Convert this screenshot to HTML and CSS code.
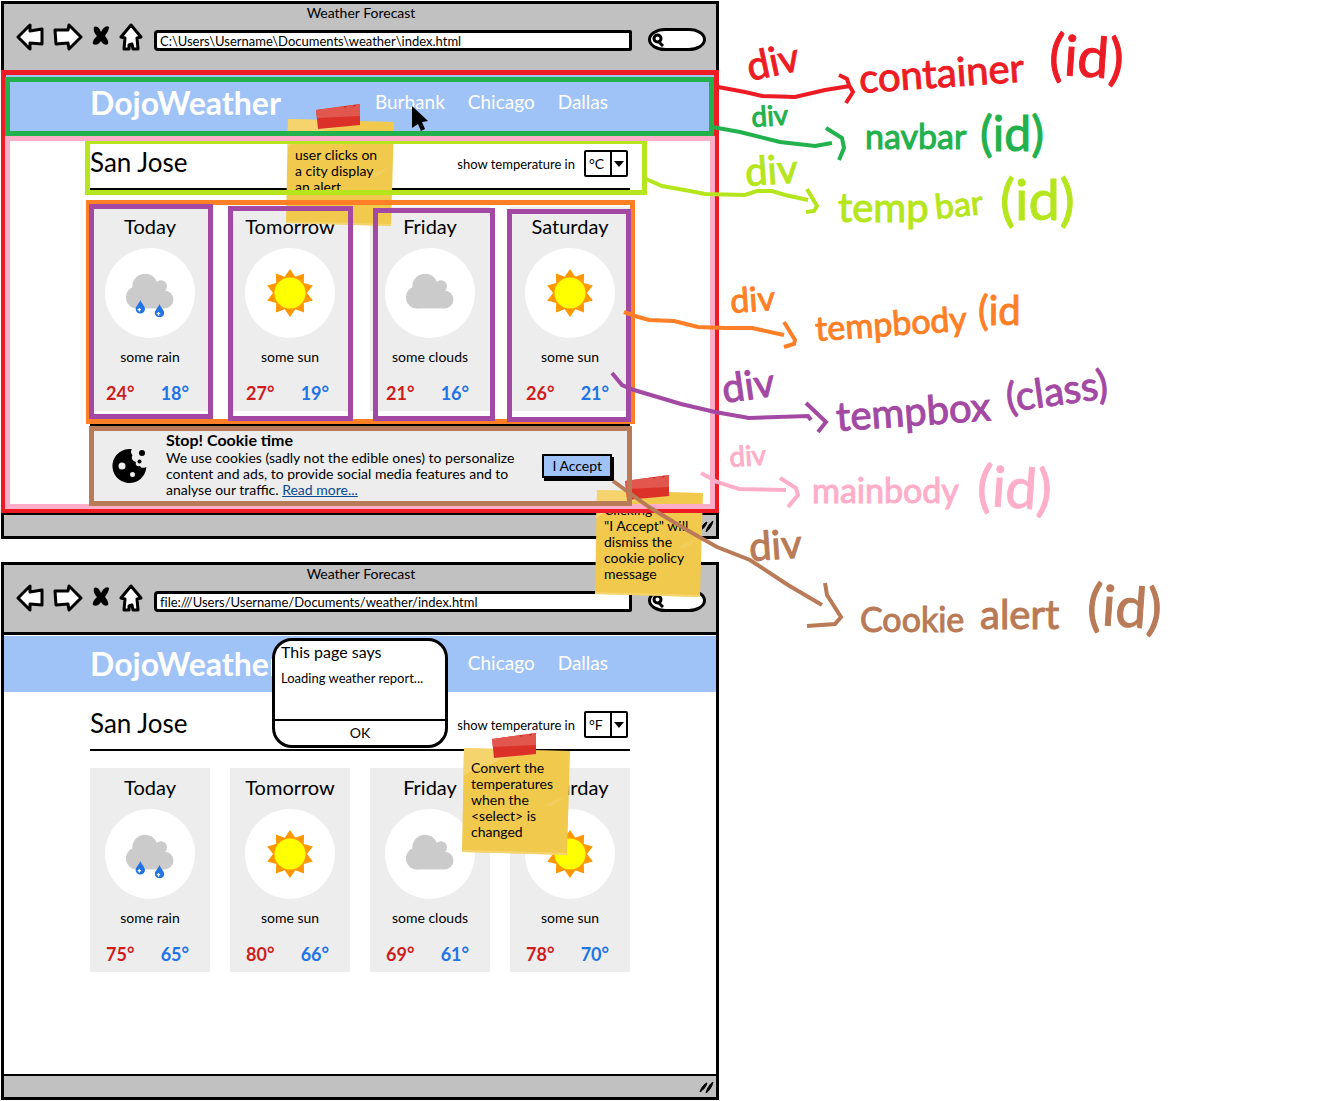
FILE: index.html
```html
<!DOCTYPE html>
<html lang="en">
<head>
<meta charset="utf-8">
<meta name="viewport" content="width=device-width, initial-scale=1">
<title>Weather Forecast wireframes</title>
<link rel="stylesheet" href="styles.css">
</head>
<body>
<svg class="sprite" aria-hidden="true">
  <symbol id="i-back" viewBox="0 0 28 28"><path d="M2 14 L14 2 L14 8 L26 6 L26 21 L14 20 L14 26 Z"/></symbol>
  <symbol id="i-forward" viewBox="0 0 30 28"><path d="M2 7 L15 7 L16 2 L28 14 L16 26 L15 20 L3 21 Z"/></symbol>
  <symbol id="i-stop" viewBox="0 0 18 28"><path class="solid" d="M2 4 C5 2 8 6 9 9 C11 5 14 2 17 4 C17 8 14 11 13 13 C15 16 17 18 16 21 C13 23 10 20 9 18 C7 21 4 23 1 21 C0 18 3 15 5 13 C3 11 1 8 2 4Z"/></symbol>
  <symbol id="i-home" viewBox="0 0 24 28"><path d="M12 2 L22 14 L18 15 L19 26 L14 26 L13 21 L10 22 L10 26 L5 26 L6 15 L2 14 Z"/></symbol>
  <symbol id="i-search" viewBox="0 0 12 14"><circle cx="5.500" cy="5.500" r="3.500" fill="none" stroke="#000" stroke-width="3"/><path d="M6 8 L11 13" stroke="#000" stroke-width="3"/></symbol>
  <symbol id="i-grip" viewBox="0 0 16 14"><path d="M2 12 C3 8 6 4 9 3 C8 7 5 10 2 12Z M8 13 C9 8 12 4 15 2 C14 7 11 11 8 13Z" stroke="#000" stroke-width="1"/></symbol>
  <symbol id="i-sun" viewBox="0 0 48 48">
    <path fill="#ff9800" d="M24 0L29.3 7.8 38.1 4.6 37.8 14 46.8 16.6 41 24 46.8 31.4 37.8 34 38.1 43.4 29.3 40.2 24 48 18.7 40.2 9.9 43.4 10.2 34 1.2 31.4 7 24 1.2 16.6 10.2 14 9.9 4.6 18.7 7.8Z"/>
    <circle cx="24" cy="24" r="15.5" fill="#ff0"/>
  </symbol>
  <symbol id="i-cloud" viewBox="0 0 48 48">
    <g fill="#cbcbcb"><circle cx="19" cy="17.4" r="12.7"/><circle cx="35" cy="17.2" r="6"/><circle cx="11" cy="28.4" r="11"/><circle cx="38.5" cy="30.5" r="8.9"/><path d="M11 20H38.500V39.400H11Z"/></g>
  </symbol>
  <symbol id="i-rain" viewBox="0 0 48 48">
    <use href="#i-cloud"/>
    <g fill="#2374e1"><path d="M14.300 31C16 35 19 37 19 40A4.700 4.500 0 0 1 9.600 40C9.600 37 13 35 14.300 31Z"/><path d="M33.500 35C35 39 38.200 41 38.200 44A4.700 4.300 0 0 1 28.800 44C28.800 41 32 39 33.500 35Z"/></g>
    <path d="M13.300 39V42.500M11.600 40.700H15M32.500 43V46.500M30.800 44.700H34.200" stroke="#fff" stroke-width="1.200"/>
  </symbol>
  <symbol id="i-note" viewBox="0 0 110 124">
    <path fill="#f1c94d" d="M3 15L109 18 106 122 1 119Z"/>
    <path fill="#f6d87b" d="M3 15L70 17C60 24 44 24 36 28 26 34 12 34 2 44Z" opacity=".7"/>
    <path fill="#f6d87b" d="M1 117L106 120 106 122 1 119Z" opacity=".7"/>
    <path fill="#f6d87b" d="M85 72C92 67 98 66 104 64 100 68 94 70 91 74Z" opacity=".4"/>
    <path fill="#dc3128" d="M31 6L75 0 75 21 33 25Z"/>
    <path fill="#e1574d" d="M31 6L75 0 75 12 32 14Z"/>
    <path fill="#b92720" d="M59 2L62 2 60 4ZM68 1L71 1 69 3Z"/>
  </symbol>
</svg>

<main class="board">
  <div class="mockups">

    <section class="window">
      <header class="chrome">
        <h2 class="chrome-title">Weather Forecast</h2>
        <div class="toolbar">
          <button class="tool" aria-label="Back"><svg width="28" height="28"><use href="#i-back"/></svg></button>
          <button class="tool" aria-label="Forward"><svg width="30" height="28"><use href="#i-forward"/></svg></button>
          <button class="tool" aria-label="Stop"><svg width="18" height="28"><use href="#i-stop"/></svg></button>
          <button class="tool" aria-label="Home"><svg width="24" height="28"><use href="#i-home"/></svg></button>
          <input class="address" type="text" aria-label="Address" value="C:\Users\Username\Documents\weather\index.html">
          <div class="search"><svg width="12" height="14"><use href="#i-search"/></svg><input type="text" aria-label="Search"></div>
        </div>
      </header>
      <div class="page">
        <div class="frame frame-container"></div>
        <div class="frame frame-mainbody"></div>
        <nav class="navbar">
          <div class="navbar-inner">
            <h1 class="brand">DojoWeather</h1>
            <ul class="cities">
              <li><a href="#burbank">Burbank</a><svg class="cursor" width="16" height="25" viewBox="0 0 16 25"><path d="M0 0L16 15 10 16 13 23 9 25 6 18 0 22Z"/></svg></li>
              <li><a href="#chicago">Chicago</a></li>
              <li><a href="#dallas">Dallas</a></li>
            </ul>
          </div>
          <div class="frame frame-navbar"></div>
        </nav>
        <div class="content">
          <div class="tempbar">
            <h2 class="place">San Jose</h2>
            <label for="unit-c">show temperature in</label>
            <div class="unit"><select id="unit-c"><option>°C</option><option>°F</option></select><svg width="10" height="6" viewBox="0 0 10 6"><path d="M0 0H10L5 6Z"/></svg></div>
            <div class="frame frame-tempbar"></div>
          </div>
          <div class="tempbody">
            <div class="frame frame-tempbody"></div>
            <article class="tempbox"><h3>Today</h3><div class="disc"><svg width="48" height="48"><use href="#i-rain"/></svg></div><p>some rain</p><div class="temps"><b class="high">24°</b><b class="low">18°</b></div><div class="frame frame-tempbox box-1"></div></article>
            <article class="tempbox"><h3>Tomorrow</h3><div class="disc"><svg width="48" height="48"><use href="#i-sun"/></svg></div><p>some sun</p><div class="temps"><b class="high">27°</b><b class="low">19°</b></div><div class="frame frame-tempbox box-2"></div></article>
            <article class="tempbox"><h3>Friday</h3><div class="disc"><svg width="48" height="48"><use href="#i-cloud"/></svg></div><p>some clouds</p><div class="temps"><b class="high">21°</b><b class="low">16°</b></div><div class="frame frame-tempbox box-3"></div></article>
            <article class="tempbox"><h3>Saturday</h3><div class="disc"><svg width="48" height="48"><use href="#i-sun"/></svg></div><p>some sun</p><div class="temps"><b class="high">26°</b><b class="low">21°</b></div><div class="frame frame-tempbox box-4"></div></article>
          </div>
          <aside class="cookie">
            <svg class="cookie-icon" width="36" height="36" viewBox="0 0 36 36"><path d="M20 1.200A17 17 0 1 0 34.400 19C31 20.500 29 20 28 18 25 19 23 17 24 14 20 13 19 10 20.500 7 18.500 5 18.500 3 20 1.200Z"/><circle cx="30" cy="5" r="3"/><circle cx="27.500" cy="13.500" r="2"/><g fill="#ededed"><circle cx="10" cy="18" r="3.500"/><circle cx="20.500" cy="26.500" r="2.500"/></g></svg>
            <div class="cookie-text">
              <h3>Stop! Cookie time</h3>
              <p>We use cookies (sadly not the edible ones) to personalize content and ads, to provide social media features and to analyse our traffic. <a href="#cookies">Read more...</a></p>
            </div>
            <button class="accept">I Accept</button>
            <div class="frame frame-cookie"></div>
          </aside>
        </div>
        <div class="note note-city"><svg width="110" height="124"><use href="#i-note"/></svg><p>When the<br>user clicks on<br>a city display<br>an alert</p></div>
        <div class="note note-accept"><svg width="110" height="124"><use href="#i-note"/></svg><p>Clicking<br>"I Accept" will<br>dismiss the<br>cookie policy<br>message</p></div>
      </div>
      <footer class="status"><svg width="16" height="14"><use href="#i-grip"/></svg></footer>
    </section>

    <section class="window">
      <header class="chrome">
        <h2 class="chrome-title">Weather Forecast</h2>
        <div class="toolbar">
          <button class="tool" aria-label="Back"><svg width="28" height="28"><use href="#i-back"/></svg></button>
          <button class="tool" aria-label="Forward"><svg width="30" height="28"><use href="#i-forward"/></svg></button>
          <button class="tool" aria-label="Stop"><svg width="18" height="28"><use href="#i-stop"/></svg></button>
          <button class="tool" aria-label="Home"><svg width="24" height="28"><use href="#i-home"/></svg></button>
          <input class="address" type="text" aria-label="Address" value="file:///Users/Username/Documents/weather/index.html">
          <div class="search"><svg width="12" height="14"><use href="#i-search"/></svg><input type="text" aria-label="Search"></div>
        </div>
      </header>
      <div class="page">
        <nav class="navbar">
          <div class="navbar-inner">
            <h1 class="brand">DojoWeather</h1>
            <ul class="cities">
              <li><a href="#burbank">Burbank</a></li>
              <li><a href="#chicago">Chicago</a></li>
              <li><a href="#dallas">Dallas</a></li>
            </ul>
          </div>
        </nav>
        <div class="content">
          <div class="tempbar">
            <h2 class="place">San Jose</h2>
            <label for="unit-f">show temperature in</label>
            <div class="unit"><select id="unit-f"><option>°F</option><option>°C</option></select><svg width="10" height="6" viewBox="0 0 10 6"><path d="M0 0H10L5 6Z"/></svg></div>
          </div>
          <div class="tempbody">
            <article class="tempbox"><h3>Today</h3><div class="disc"><svg width="48" height="48"><use href="#i-rain"/></svg></div><p>some rain</p><div class="temps"><b class="high">75°</b><b class="low">65°</b></div></article>
            <article class="tempbox"><h3>Tomorrow</h3><div class="disc"><svg width="48" height="48"><use href="#i-sun"/></svg></div><p>some sun</p><div class="temps"><b class="high">80°</b><b class="low">66°</b></div></article>
            <article class="tempbox"><h3>Friday</h3><div class="disc"><svg width="48" height="48"><use href="#i-cloud"/></svg></div><p>some clouds</p><div class="temps"><b class="high">69°</b><b class="low">61°</b></div></article>
            <article class="tempbox"><h3>Saturday</h3><div class="disc"><svg width="48" height="48"><use href="#i-sun"/></svg></div><p>some sun</p><div class="temps"><b class="high">78°</b><b class="low">70°</b></div></article>
          </div>
        </div>
        <div class="alert" role="alertdialog" aria-labelledby="alert-title">
          <h3 id="alert-title">This page says</h3>
          <p>Loading weather report...</p>
          <button>OK</button>
        </div>
        <div class="note note-select"><svg width="110" height="124"><use href="#i-note"/></svg><p>Convert the<br>temperatures<br>when the<br>&lt;select&gt; is<br>changed</p></div>
      </div>
      <footer class="status"><svg width="16" height="14"><use href="#i-grip"/></svg></footer>
    </section>
  </div>

  <svg class="annotations" viewBox="0 0 1339 1101">
    <g class="ink red">
      <path d="M718 87L745 92 762 96 795 97 825 90 850 86M839 75L847 79 849 85 853 92 846 103"/>
      <text class="lg" transform="translate(750 81) rotate(-12)">div</text>
      <text class="lg" transform="translate(860 93) rotate(-4)">container</text>
      <text class="xxl" transform="translate(1048 74) rotate(4)">(id)</text>
    </g>
    <g class="ink green">
      <path d="M712 127L740 132 780 142 815 146 832 143M826 128L842 138 844 148 839 160"/>
      <text class="sm" transform="translate(752 127) rotate(-4)">div</text>
      <text class="md" x="865" y="149">navbar</text>
      <text class="xl" x="980" y="151">(id)</text>
    </g>
    <g class="ink lime">
      <path d="M646 179L662 186 690 191 705 194 745 195 757 191 772 191 785 195 808 200M807 189L817 206 814 211 806 212"/>
      <text class="lg" transform="translate(746 186) rotate(-4)">div</text>
      <text class="lg" x="838" y="222">temp</text>
      <text class="md" transform="translate(936 219) rotate(-6)">bar</text>
      <text class="xxl" x="1000" y="220">(id)</text>
    </g>
    <g class="ink orange">
      <path d="M624 312L635 316 649 320 674 321 698 327 725 328 752 328 784 335M784 322L795 340 794 344 784 347"/>
      <text class="md" transform="translate(731 313) rotate(-4)">div</text>
      <text class="md" transform="translate(816 341) rotate(-4)">tempbody</text>
      <text class="lg" x="978" y="325">(id</text>
    </g>
    <g class="ink purple">
      <path d="M612 373L622 385 634 390 681 404 715 412 749 418 808 416 811 420M806 403L826 422 818 432"/>
      <text class="lg" transform="translate(724 403) rotate(-8)">div</text>
      <text class="lg" transform="translate(837 431) rotate(-4)">tempbox</text>
      <text class="lg" transform="translate(1008 412) rotate(-8)">(class)</text>
    </g>
    <g class="ink pink">
      <path d="M701 473L717 482 739 489 786 490M780 478L796 488 798 495 788 507"/>
      <text class="sm" transform="translate(730 467) rotate(-4)">div</text>
      <text class="md" x="812" y="503">mainbody</text>
      <text class="xxl" transform="translate(976 505) rotate(4)">(id)</text>
    </g>
    <g class="ink brown">
      <path d="M613 481L649 507 687 530 717 547 750 560 788 585 822 605M825 583L827 595 841 617 835 624 807 626"/>
      <text class="lg" transform="translate(750 561) rotate(-4)">div</text>
      <text class="md" x="860" y="632">Cookie</text>
      <text class="lg" x="980" y="629">alert</text>
      <text class="xxl" transform="translate(1086 624) rotate(4)">(id)</text>
    </g>
  </svg>
</main>
</body>
</html>
```
FILE: styles.css
```css
* { box-sizing: border-box; }

body {
  margin: 0;
  background: #fff;
  color: #000;
  font: 14px/16px Lato, "Liberation Sans", sans-serif;
}

h1, h2, h3, p, ul { margin: 0; padding: 0; font-weight: 400; }
ul { list-style: none; }
button, input, select { font: inherit; color: inherit; }
button { cursor: pointer; }
svg { display: block; }

.sprite { position: absolute; width: 0; height: 0; }

.board {
  position: relative;
  display: grid;
  grid-template-columns: 719fr 620fr;
}

.mockups {
  display: flex;
  flex-direction: column;
  gap: 23px;
  padding: 1px 0 1px 1px;
}

/* Browser window */
.window { border: 3px solid #000; }

.chrome {
  height: 70px;
  padding: 0 10px 0 12px;
  background: #c1c1c1;
  border-bottom: 3px solid #000;
}
.chrome-title { padding-bottom: 1px; font-size: 14px; line-height: 18px; text-align: center; }

.toolbar { display: flex; align-items: flex-end; gap: 9px; }
.tool {
  align-self: flex-start;
  padding: 0;
  border: 0;
  background: none;
  fill: #fff;
  stroke: #000;
  stroke-width: 3px;
  stroke-linejoin: round;
}
.solid { fill: #000; stroke: none; }

.address {
  flex: 1;
  min-width: 0;
  height: 21px;
  margin: 0 7px 0 2px;
  padding: 0 3px;
  border: 3px solid #000;
  border-radius: 4px 2px 2px 4px;
  background: #fff;
  font-size: 13px;
  font-variant-ligatures: none;
}
.search {
  display: flex;
  align-items: center;
  width: 58px;
  height: 23px;
  padding-left: 1px;
  border: 3px solid #000;
  border-radius: 18px / 12px;
  background: #fff;
}
.search svg { flex: none; }
.search input { flex: 1; min-width: 0; padding: 0; border: 0; background: none; }

.page { position: relative; min-height: 439px; padding-top: 1px; }

.status {
  display: flex;
  justify-content: flex-end;
  align-items: center;
  height: 23px;
  padding-right: 2px;
  border-top: 2px solid #000;
  background: #c1c1c1;
}

/* Navigation */
.navbar { position: relative; background: #9fc3f7; color: #fff; }
.navbar-inner {
  display: flex;
  align-items: center;
  justify-content: space-between;
  max-width: 540px;
  height: 56px;
  margin: 0 auto;
}
.brand { font-size: 32px; line-height: 40px; font-weight: 700; }
.cities { display: flex; gap: 23px; padding: 0 22px 2px 0; font-size: 19px; line-height: 24px; }
.cities li { position: relative; }
.cities a { color: inherit; text-decoration: none; }
.cursor { position: absolute; left: 37px; top: 16px; fill: #000; }

/* Forecast */
.content { max-width: 540px; margin: 0 auto; }

.tempbar {
  position: relative;
  display: flex;
  align-items: center;
  gap: 9px;
  height: 59px;
  padding: 8px 2px 0 0;
  border-bottom: 2px solid #000;
}
.place { flex: 1; padding-bottom: 4px; font-size: 26px; line-height: 32px; }
.tempbar label { font-size: 13px; }
.unit { position: relative; }
.unit select {
  appearance: none;
  display: block;
  width: 44px;
  height: 27px;
  padding: 0 0 0 3px;
  border: 2px solid #000;
  border-radius: 2px;
  background: linear-gradient(#000, #000) 24px 0 / 2px 100% no-repeat #fff;
}
.unit svg { position: absolute; right: 4px; top: 11px; pointer-events: none; }

.tempbody {
  position: relative;
  display: grid;
  grid-template-columns: repeat(4, 1fr);
  gap: 20px;
  margin-top: 17px;
}
.tempbox {
  position: relative;
  display: flex;
  flex-direction: column;
  align-items: center;
  height: 204px;
  padding-top: 7px;
  background: #ededed;
}
.tempbox h3 { font-size: 20px; line-height: 24px; }
.disc {
  display: grid;
  place-items: center;
  width: 90px;
  height: 90px;
  margin: 10px 0 11px;
  border-radius: 50%;
  background: #fff;
}
.temps {
  display: flex;
  justify-content: space-between;
  align-self: stretch;
  padding: 16px 21px 0 16px;
  font-size: 18px;
  line-height: 24px;
}
.high { color: #cf1d1d; }
.low { color: #1f74e6; }

/* Cookie message */
.cookie {
  position: relative;
  display: flex;
  align-items: center;
  height: 82px;
  margin-top: 13px;
  padding: 0 18px 0 22px;
  border-top: 2px solid #000;
  background: #ededed;
}
.cookie-icon { flex: none; }
.cookie-text { flex: 1; padding: 0 20px 4px 18px; }
.cookie-text h3 { font-size: 16px; line-height: 20px; font-weight: 700; }
.cookie-text a { color: #0a4a94; }
.accept {
  height: 24px;
  padding: 0 8px;
  border: 2px solid #000;
  background: #9fc3f7;
  box-shadow: 2px 3px 0 #000;
}

/* Alert box */
.alert {
  position: absolute;
  z-index: 2;
  left: 268px;
  top: 3px;
  display: flex;
  flex-direction: column;
  width: 176px;
  height: 110px;
  border: 3px solid #000;
  border-radius: 20px;
  background: #fff;
}
.alert h3 { padding: 2px 6px 0; font-size: 16px; line-height: 18px; }
.alert p { flex: 1; padding: 9px 6px 0; font-size: 13px; white-space: nowrap; }
.alert button { height: 26px; padding: 0; border: 0; border-top: 2px solid #000; background: none; }

/* Sticky notes */
.note { position: absolute; z-index: 2; width: 110px; height: 124px; padding: 27px 0 0 10px; }
.note svg { position: absolute; left: 0; top: 0; }
.note p { position: relative; white-space: nowrap; }
.note-city { left: 281px; top: 30px; }
.note-accept { left: 590px; top: 401px; }
.note-select { left: 457px; top: 98px; }

/* Coloured outlines over the first window */
.frame { position: absolute; z-index: 3; border: 5px solid; pointer-events: none; }
.frame-container { inset: -4px -3px 0 -3px; color: #ed1c24; }
.frame-mainbody { inset: 62px 1px 4px 1px; color: #ffaec9; }
.frame-navbar { inset: 2px 2px -5px 1px; color: #22b14c; }
.frame-tempbar { inset: 10px -17px -7px -5px; border-top-width: 3px; color: #b5e61d; }
.frame-tempbody { inset: -7px -5px -13px -4px; color: #ff7f27; }
.frame-tempbox { color: #a349a4; }
.box-1 { inset: -3px -3px -8px -1px; }
.box-2 { inset: -1px -3px -10px -2px; }
.box-3 { inset: 1px -5px -10px 3px; }
.box-4 { inset: 2px -1px -11px -3px; }
.frame-cookie { inset: 0 -2px 0 -1px; color: #b97a57; }

/* Arrows and labels */
.annotations { position: absolute; z-index: 4; left: 0; top: 0; width: 100%; pointer-events: none; }
.ink path { fill: none; stroke: currentColor; stroke-width: 4px; }
.ink text { fill: currentColor; stroke: currentColor; stroke-width: 1px; }
.sm { font-size: 28px; }
.md { font-size: 34px; }
.lg { font-size: 40px; }
.xl { font-size: 48px; }
.xxl { font-size: 56px; }
.red { color: #ed1c24; }
.green { color: #22b14c; }
.lime { color: #b5e61d; }
.orange { color: #ff7f27; }
.purple { color: #a349a4; }
.pink { color: #ffaec9; }
.brown { color: #b97a57; }
```
